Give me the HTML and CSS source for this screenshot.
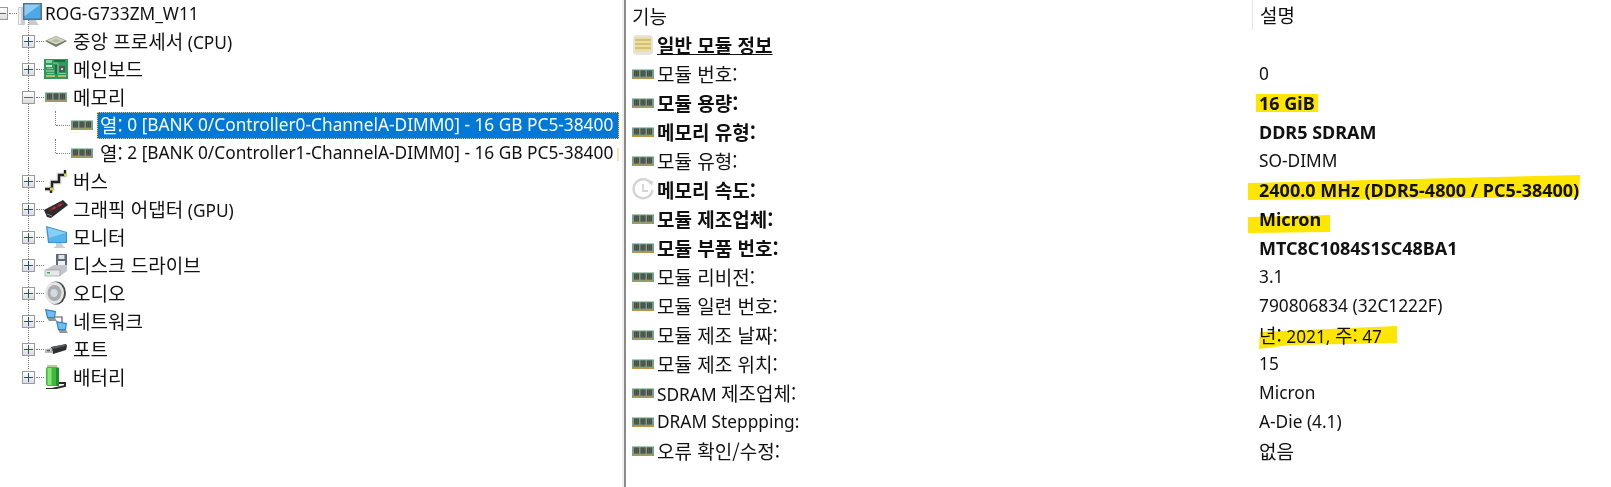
FILE: index.html
```html
<!DOCTYPE html>
<html lang="ko">
<head>
<meta charset="UTF-8" />
<title>메모리 - ROG-G733ZM_W11</title>
<link rel="stylesheet" href="styles.css">
</head>
<body>
<svg class="defs" width="0" height="0">
  <symbol id="ram" viewBox="0 0 24 24">
    <rect x="1" y="7" width="22" height="10" fill="#6fa58a"/>
    <rect x="1" y="7" width="22" height="1" fill="#a9cdb8"/>
    <rect x="3" y="8.5" width="5" height="6" fill="#4a4a44"/>
    <rect x="9.5" y="8.5" width="5" height="6" fill="#4a4a44"/>
    <rect x="16" y="8.5" width="5" height="6" fill="#4a4a44"/>
    <path d="M4.5 8.5 V14.5 M6.5 8.5 V14.5 M11 8.5 V14.5 M13 8.5 V14.5 M17.5 8.5 V14.5 M19.5 8.5 V14.5" stroke="#6b6b62" stroke-width=".6"/>
    <rect x="2" y="15.5" width="9" height="1.5" fill="#c98f3c"/>
    <rect x="13" y="15.5" width="9" height="1.5" fill="#c98f3c"/>
  </symbol>
</svg>

<div class="window">
  <!-- device tree -->
  <ul class="tree">
    <li class="node node-root">
      <span class="toggle open"></span><span class="dots"></span>
      <svg class="icon" viewBox="0 0 24 24">
        <rect x="0" y="5" width="7" height="18" rx="1" fill="#c9ced3"/>
        <rect x="1" y="6" width="2" height="16" fill="#eef0f2"/>
        <path d="M5 1 L24 1 L24 18 L5 18 Z" fill="#5a6f82"/>
        <path d="M6.5 2.5 L22.5 2.5 L22.5 16.5 L6.5 16.5 Z" fill="#4ea7e6"/>
        <path d="M6.5 2.5 L22.5 2.5 L6.5 14 Z" fill="#8fcdf4"/>
        <path d="M11 18 L18 18 L19 21 L21 23 L9 23 L11 21 Z" fill="#c4cbd1"/>
      </svg>
      <span class="label">ROG-G733ZM_W11</span>
    </li>
    <li class="node">
      <span class="toggle"></span><span class="dots"></span>
      <svg class="icon" viewBox="0 0 24 24">
        <path d="M1 12 L12 7 L23 12 L12 18 Z" fill="#6f7a68"/>
        <path d="M3 11.5 L12 7.5 L21 11.5 L12 15.5 Z" fill="#d6d6c4"/>
        <path d="M7 11.5 L12 9.5 L17 11.5 L12 13.8 Z" fill="#b9bba8"/>
      </svg>
      <span class="label"><span class="ko">중앙 프로세서</span> (CPU)</span>
    </li>
    <li class="node">
      <span class="toggle"></span><span class="dots"></span>
      <svg class="icon" viewBox="0 0 24 24">
        <rect x="0" y="2" width="24" height="20" fill="#2f9a5e"/>
        <rect x="2" y="3" width="6" height="3" fill="#8fd0a4"/>
        <rect x="10" y="3" width="11" height="2" fill="#1d6d41"/>
        <rect x="2" y="8" width="6" height="2" fill="#d8e8d0"/>
        <rect x="2" y="13" width="8" height="2" fill="#6cbd8b"/>
        <rect x="15" y="9" width="6" height="6" fill="#4c5a52"/>
        <rect x="17" y="11" width="2" height="2" fill="#c9d1c9"/>
        <rect x="11" y="8" width="2" height="9" fill="#1d6d41"/>
        <path d="M9 6 H14 M3 11.5 H9 M14 6.5 V17 M3 16.5 H10 M15 16.5 H22" stroke="#a8dcb6" stroke-width=".7"/>
        <rect x="2" y="18" width="9" height="2" fill="#c7b26a"/>
        <rect x="14" y="18" width="8" height="2" fill="#c7b26a"/>
      </svg>
      <span class="label ko">메인보드</span>
    </li>
    <li class="node">
      <span class="toggle open"></span><span class="dots"></span>
      <svg class="icon"><use href="#ram"/></svg>
      <span class="label ko">메모리</span>
    </li>
    <li class="node child first">
      <span class="dots"></span>
      <svg class="icon"><use href="#ram"/></svg>
      <span class="label selected"><span class="ko">열:</span>&nbsp;0 [BANK 0/Controller0-ChannelA-DIMM0] - 16 GB PC5-38400</span>
    </li>
    <li class="node child">
      <span class="dots"></span>
      <svg class="icon"><use href="#ram"/></svg>
      <span class="label sliver"><span class="ko">열:</span>&nbsp;2 [BANK 0/Controller1-ChannelA-DIMM0] - 16 GB PC5-38400</span>
    </li>
    <li class="node">
      <span class="toggle"></span><span class="dots"></span>
      <svg class="icon" viewBox="0 0 24 24">
        <path d="M1 20 L8 20 L8 13 L15 13 L15 6 L22 6" fill="none" stroke="#e2e2e2" stroke-width="5"/>
        <path d="M1 20 L8 20 L8 13 L15 13 L15 6 L22 6" fill="none" stroke="#222" stroke-width="2.4"/>
        <path d="M7 18 V24" stroke="#222" stroke-width="2.4"/>
        <path d="M21 1 V6" stroke="#222" stroke-width="2.4"/>
        <rect x="6" y="18.5" width="3" height="3" fill="#d8d23a"/>
        <rect x="20" y="4.5" width="3" height="3" fill="#d8d23a"/>
      </svg>
      <span class="label ko">버스</span>
    </li>
    <li class="node">
      <span class="toggle"></span><span class="dots"></span>
      <svg class="icon" viewBox="0 0 24 24">
        <path d="M0 13 L19 3 L24 8 L7 21 L3 20 Z" fill="#2b2b2e"/>
        <path d="M4 12.5 L18 5 L20 7 L6 15 Z" fill="#5a2a2e"/>
        <path d="M8 11 L11 9.5 L12 11 L9 12.5 Z M14 8 L17 6.5 L18 8 L15 9.5 Z" fill="#c8313a"/>
        <path d="M3 17 L8 19" stroke="#8a8a8a"/>
      </svg>
      <span class="label"><span class="ko">그래픽 어댑터</span> (GPU)</span>
    </li>
    <li class="node">
      <span class="toggle"></span><span class="dots"></span>
      <svg class="icon" viewBox="0 0 24 24">
        <path d="M2 1 L23 7 L23 18 L4 18 Z" fill="#3f8fd0"/>
        <path d="M3.5 2.5 L22 7.8 L22 17 L5 17 Z" fill="#55b6ef"/>
        <path d="M3.5 2.5 L22 7.8 L5 13 Z" fill="#86d0f6"/>
        <path d="M12 18 L18 18 L19 21 L22 23 L9 23 L12 21 Z" fill="#c8d0d4"/>
      </svg>
      <span class="label ko">모니터</span>
    </li>
    <li class="node">
      <span class="toggle"></span><span class="dots"></span>
      <svg class="icon" viewBox="0 0 24 24">
        <rect x="12" y="1" width="11" height="13" fill="#5d6c7c"/>
        <rect x="14.5" y="2" width="6" height="4" fill="#dfe4e8"/>
        <rect x="14" y="8" width="7" height="6" fill="#eef0f2"/>
        <path d="M1 17 L10 12 L23 12 L23 18 L16 23 L1 23 Z" fill="#c3c6c8"/>
        <path d="M1 17 L16 17 L16 23 L1 23 Z" fill="#e7e8e9" stroke="#8c8f91" stroke-width=".6"/>
        <rect x="3" y="19" width="3" height="1.5" fill="#3ea35a"/>
      </svg>
      <span class="label ko">디스크 드라이브</span>
    </li>
    <li class="node">
      <span class="toggle"></span><span class="dots"></span>
      <svg class="icon" viewBox="0 0 24 24">
        <ellipse cx="12" cy="12" rx="10" ry="11.5" fill="#4b4b4b"/>
        <ellipse cx="10.5" cy="12" rx="9.5" ry="11" fill="#e4e6e8"/>
        <ellipse cx="10.5" cy="12" rx="7" ry="8" fill="#a8adb1"/>
        <ellipse cx="10" cy="12" rx="3.5" ry="4" fill="#d7dadc"/>
      </svg>
      <span class="label ko">오디오</span>
    </li>
    <li class="node">
      <span class="toggle"></span><span class="dots"></span>
      <svg class="icon" viewBox="0 0 24 24">
        <path d="M8 8 H18 V14" fill="none" stroke="#555" stroke-width="1.2"/>
        <path d="M1 0 L12 2 L11 9 L3 9 Z" fill="#2f7fc4"/>
        <path d="M2.5 1.5 L10.8 3 L10 8 L4 8 Z" fill="#6fc0ef"/>
        <path d="M3 9 L11 9 L13 12 L5 12 Z" fill="#8d949a"/>
        <path d="M12 12 L23 14 L22 21 L14 21 Z" fill="#2f7fc4"/>
        <path d="M13.5 13.5 L21.8 15 L21 20 L15 20 Z" fill="#6fc0ef"/>
        <path d="M14 21 L22 21 L24 24 L16 24 Z" fill="#8d949a"/>
      </svg>
      <span class="label ko">네트워크</span>
    </li>
    <li class="node">
      <span class="toggle"></span><span class="dots"></span>
      <svg class="icon" viewBox="0 0 24 24">
        <path d="M7 10 L22 7 L23 9 L22 13 L9 17 Z" fill="#2e2e30"/>
        <path d="M8 10 L21 7.5 L21.5 9 L9 12 Z" fill="#5f6063"/>
        <path d="M1 12 L8 11 L9 16 L1 16 Z" fill="#b9bcbf"/>
        <rect x="3" y="13" width="3" height="1.2" fill="#55585b"/>
      </svg>
      <span class="label ko">포트</span>
    </li>
    <li class="node">
      <span class="toggle"></span><span class="dots"></span>
      <svg class="icon" viewBox="0 0 24 24">
        <rect x="3" y="0" width="10" height="3" fill="#b7c9a8"/>
        <rect x="2" y="2" width="13" height="19" rx="2" fill="#3dbb3d"/>
        <rect x="3.5" y="3" width="4" height="17" fill="#8be27a"/>
        <rect x="12" y="3" width="3" height="18" fill="#1f8f2f"/>
        <path d="M15 18 H21 V21 L8 24 L2 24" fill="none" stroke="#2b2b2b" stroke-width="2"/>
      </svg>
      <span class="label ko">배터리</span>
    </li>
  </ul>

  <div class="splitter"></div>

  <!-- property list -->
  <div class="list">
    <div class="list-head">
      <div class="col-name ko">기능</div>
      <div class="col-value ko">설명</div>
    </div>

    <div class="item section">
      <div class="col-name">
        <svg class="icon" viewBox="0 0 24 24">
          <rect x="2" y="2" width="20" height="20" rx="4" fill="#e4e4e0"/>
          <rect x="4" y="4" width="16" height="15" fill="#ecdf9c"/>
          <path d="M4 7 H20 M4 11 H20 M4 15 H20" stroke="#cdb868" stroke-width="1.4"/>
        </svg>
        <span class="section-title ko">일반 모듈 정보</span>
      </div>
      <div class="col-value"></div>
    </div>

    <div class="item"><div class="col-name"><svg class="icon"><use href="#ram"/></svg><span class="ko">모듈 번호:</span></div><div class="col-value">0</div></div>
    <div class="item strong"><div class="col-name"><svg class="icon"><use href="#ram"/></svg><span class="ko">모듈 용량:</span></div><div class="col-value">16 GiB</div></div>
    <div class="item strong"><div class="col-name"><svg class="icon"><use href="#ram"/></svg><span class="ko">메모리 유형:</span></div><div class="col-value">DDR5 SDRAM</div></div>
    <div class="item"><div class="col-name"><svg class="icon"><use href="#ram"/></svg><span class="ko">모듈 유형:</span></div><div class="col-value">SO-DIMM</div></div>
    <div class="item strong">
      <div class="col-name">
        <svg class="icon" viewBox="0 0 24 24">
          <path d="M20 5.5 A9.5 9.5 0 1 0 21.5 12" fill="none" stroke="#d4d4d4" stroke-width="2.4"/>
          <path d="M17 2 L22 3 L21 8 Z" fill="#d4d4d4"/>
          <path d="M12 6 V13 H17" fill="none" stroke="#d4d4d4" stroke-width="1.8"/>
        </svg>
        <span class="ko">메모리 속도:</span>
      </div>
      <div class="col-value">2400.0 MHz (DDR5-4800 / PC5-38400)</div>
    </div>
    <div class="item strong"><div class="col-name"><svg class="icon"><use href="#ram"/></svg><span class="ko">모듈 제조업체:</span></div><div class="col-value">Micron</div></div>
    <div class="item strong"><div class="col-name"><svg class="icon"><use href="#ram"/></svg><span class="ko">모듈 부품 번호:</span></div><div class="col-value">MTC8C1084S1SC48BA1</div></div>
    <div class="item"><div class="col-name"><svg class="icon"><use href="#ram"/></svg><span class="ko">모듈 리비전:</span></div><div class="col-value">3.1</div></div>
    <div class="item"><div class="col-name"><svg class="icon"><use href="#ram"/></svg><span class="ko">모듈 일련 번호:</span></div><div class="col-value">790806834 (32C1222F)</div></div>
    <div class="item"><div class="col-name"><svg class="icon"><use href="#ram"/></svg><span class="ko">모듈 제조 날짜:</span></div><div class="col-value"><span class="ko">년:</span> 2021, <span class="ko">주:</span> 47</div></div>
    <div class="item"><div class="col-name"><svg class="icon"><use href="#ram"/></svg><span class="ko">모듈 제조 위치:</span></div><div class="col-value">15</div></div>
    <div class="item"><div class="col-name"><svg class="icon"><use href="#ram"/></svg><span>SDRAM <span class="ko">제조업체:</span></span></div><div class="col-value">Micron</div></div>
    <div class="item"><div class="col-name"><svg class="icon"><use href="#ram"/></svg><span>DRAM Steppping:</span></div><div class="col-value">A-Die (4.1)</div></div>
    <div class="item"><div class="col-name"><svg class="icon"><use href="#ram"/></svg><span class="ko">오류 확인/수정:</span></div><div class="col-value ko">없음</div></div>

    <!-- hand drawn marker strokes on top of the values -->
    <svg class="marker" width="385" height="487" viewBox="1226 0 385 487">
      <polygon points="1256,94 1318,94 1318,112 1256,112"/>
      <polygon points="1248,183 1580,175 1579,197 1248,200"/>
      <polygon points="1248,217 1330,215 1330,232 1248,233"/>
      <polygon points="1260,332 1397,326 1397,343 1290,345 1259,349"/>
    </svg>
  </div>
</div>
</body>
</html>
```

FILE: styles.css
```css
html, body {
  margin: 0;
  padding: 0;
  height: 100%;
  overflow: hidden;
  background: #fff;
}
body {
  font-family: "Noto Sans", "Noto Sans CJK KR", sans-serif;
  font-size: 17.3px;
  color: #111;
}
/* hangul runs wider than the latin in the original */
.ko {
  font-family: "Noto Sans CJK KR", sans-serif;
  font-size: 19px;
}
.defs {
  position: absolute;
}
.window {
  display: flex;
  height: 487px;
}
.icon {
  width: 24px;
  height: 24px;
  flex: none;
}

/* tree */
.tree {
  position: relative;
  width: 622px;
  flex: none;
  margin: 0;
  padding: 0;
  list-style: none;
}
.tree::before {
  content: "";
  position: absolute;
  left: 28px;
  top: 20px;
  height: 349px;
  border-left: 1px dotted #808080;
}
.node {
  display: flex;
  align-items: center;
  height: 28px;
  padding-left: 22px;
}
.node-root {
  height: 27px;
  padding-left: 0;
  margin-left: -5px;
}
.toggle {
  position: relative;
  width: 11px;
  height: 11px;
  flex: none;
  border: 1px solid #9a9a9a;
  background: linear-gradient(#fff, #dcdcdc);
}
.toggle::before,
.toggle::after {
  content: "";
  position: absolute;
  background: #2c4a8c;
}
.toggle::before {
  left: 1px;
  right: 1px;
  top: 5px;
  height: 1px;
}
.toggle::after {
  top: 1px;
  bottom: 1px;
  left: 5px;
  width: 1px;
}
.toggle.open::after {
  display: none;
}
.toggle.open::before {
  background: #666;
}
.dots {
  width: 8px;
  margin-left: 1px;
  flex: none;
  border-top: 1px dotted #808080;
}
.node-root .dots {
  margin-right: 1px;
}
.label {
  padding-left: 5px;
  padding-bottom: 2px;
  white-space: nowrap;
}
.node-root .label {
  padding-left: 3px;
  padding-bottom: 0;
}
.child {
  position: relative;
  padding-left: 56px;
}
.child .dots {
  width: 14px;
  margin-left: 0;
}
.child::before {
  content: "";
  position: absolute;
  left: 55px;
  top: 0;
  height: 14px;
  border-left: 1px dotted #808080;
}
.child .label {
  position: relative;
  display: flex;
  align-items: center;
  box-sizing: border-box;
  width: 522px;
  height: 27px;
  margin-left: 3px;
  padding-left: 3px;
}
.selected {
  background: #0078d7;
  color: #fff;
  outline: 1px dotted #ffc36a;
  outline-offset: -1px;
}
.sliver::after {
  content: "";
  position: absolute;
  right: 0;
  top: 8px;
  width: 2px;
  height: 13px;
  background: #ffe1ac;
}

/* divider */
.splitter {
  width: 2px;
  flex: none;
  background: #f0f0f0;
  border-right: 2px solid #8a8a8a;
}

/* list */
.list {
  position: relative;
  flex: 1;
  min-width: 0;
}
.list-head,
.item {
  display: flex;
  align-items: center;
}
.list-head {
  height: 30px;
}
.item {
  height: 29px;
}
.col-name {
  display: flex;
  align-items: center;
  box-sizing: border-box;
  width: 626px;
  flex: none;
  padding-left: 5px;
  white-space: nowrap;
}
.col-value {
  padding-left: 7px;
  white-space: nowrap;
}
.list-head .col-name {
  padding-left: 6px;
}
.list-head .col-value {
  height: 30px;
  line-height: 30px;
  border-left: 1px solid #e5e5e5;
  padding-left: 7px;
}
.item .icon {
  margin-right: 2px;
}
.strong {
  font-weight: 700;
}
.strong .col-value {
  font-size: 18px;
}
.section-title {
  font-weight: 700;
  text-decoration: underline;
}
.marker {
  position: absolute;
  right: 0;
  top: 0;
  fill: #ffe600;
  mix-blend-mode: multiply;
  pointer-events: none;
}
```
